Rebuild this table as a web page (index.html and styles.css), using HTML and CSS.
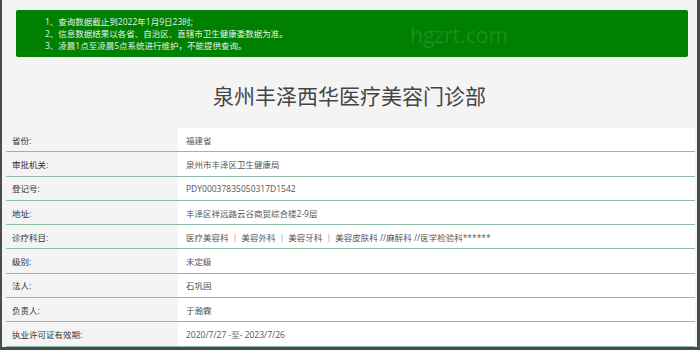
FILE: index.html
```html
<!DOCTYPE html>
<html lang="zh">
<head>
<meta charset="utf-8">
<link rel="stylesheet" href="styles.css">
</head>
<body>
<div class="frame">
  <div class="notice">
    <p>1、查询数据截止到2022年1月9日23时;</p>
    <p>2、信息数据结果以各省、自治区、直辖市卫生健康委数据为准。</p>
    <p>3、凌晨1点至凌晨5点系统进行维护，不能提供查询。</p>
  </div>
  <div class="wm wm3">hgzrt.com</div>
  <h1 class="title">泉州丰泽西华医疗美容门诊部</h1>
  <table class="info">
    <tr><th>省份:</th><td>福建省</td></tr>
    <tr><th>审批机关:</th><td>泉州市丰泽区卫生健康局</td></tr>
    <tr><th>登记号:</th><td>PDY00037835050317D1542</td></tr>
    <tr><th>地址:</th><td>丰泽区祥远路云谷商贸综合楼2-9层</td></tr>
    <tr><th>诊疗科目:</th><td>医疗美容科 ｜ 美容外科 ｜ 美容牙科 ｜ 美容皮肤科 //麻醉科 //医学检验科******</td></tr>
    <tr><th>级别:</th><td>未定级</td></tr>
    <tr><th>法人:</th><td>石巩固</td></tr>
    <tr><th>负责人:</th><td>于瀚霖</td></tr>
    <tr><th>执业许可证有效期:</th><td>2020/7/27 -至- 2023/7/26</td></tr>
  </table>
</div>
</body>
</html>
```
FILE: styles.css
```css
html, body {
  margin: 0;
  padding: 0;
  background: #4a4a4a;
}
body {
  width: 700px;
  height: 350px;
  overflow: hidden;
  font-family: "Open Sans", "Noto Sans CJK SC", sans-serif;
}
.frame {
  position: relative;
  box-sizing: border-box;
  width: 695px;
  height: 347px;
  margin-left: 2px;
  background: #f4f4f4;
  padding: 10px 0 0 0;
  overflow: hidden;
}
.notice {
  margin: 0 9px 0 14px;
  height: 47px;
  box-sizing: border-box;
  background: #008000;
  border-radius: 2px;
  padding: 6px 0 0 29px;
  color: #e6f2e6;
  font-size: 8.5px;
  line-height: 12px;
}
.notice p {
  margin: 0;
}
.wm {
  position: absolute;
  top: 22px;
  font-size: 21px;
  line-height: 26px;
  color: rgba(255, 255, 255, 0.12);
  font-family: "Open Sans", sans-serif;
  white-space: nowrap;
  pointer-events: none;
}
.wm3 { left: 408px; }
.title {
  margin: 24px 0 0 0;
  height: 47px;
  text-align: center;
  font-size: 21px;
  line-height: 30px;
  font-weight: normal;
  color: #444;
}
.info {
  margin-left: 4px;
  width: 689px;
  border-collapse: collapse;
  font-size: 8.5px;
}
.info th, .info td {
  height: 23.3px;
  padding: 0;
  border-bottom: 1.2px solid #8dbca6;
  text-align: left;
  font-weight: normal;
  vertical-align: middle;
}
.info th {
  width: 166px;
  padding-left: 6px;
  background: #f4f4f4;
  color: #333;
}
.info td {
  padding-left: 8px;
  background: #fff;
  color: #555;
}
```
